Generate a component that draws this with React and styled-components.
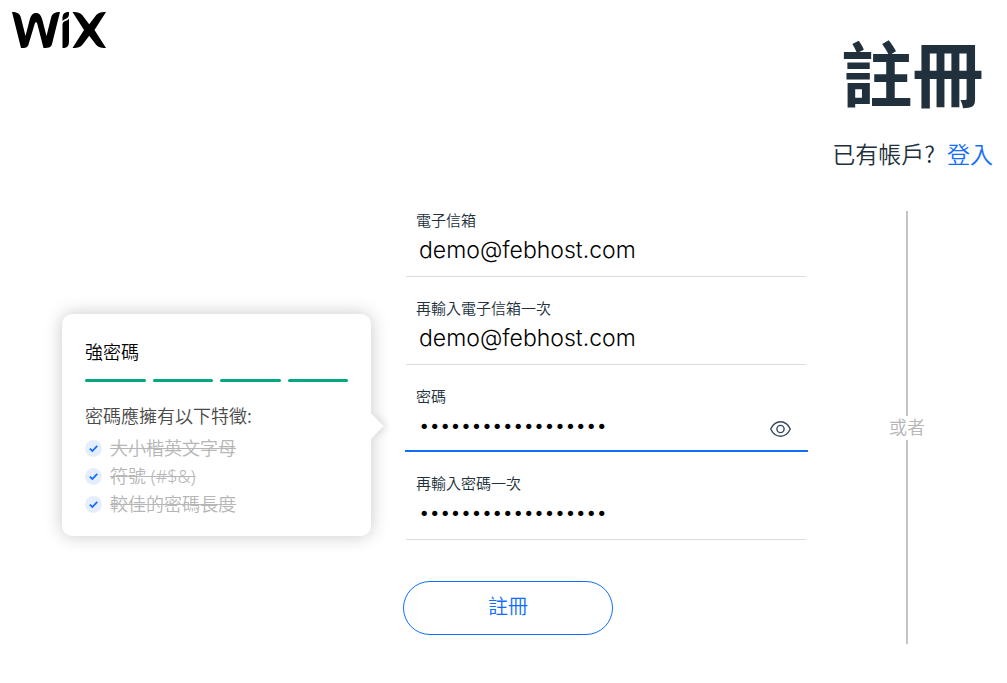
import React, { useState } from "react";
import styled, { createGlobalStyle } from "styled-components";

const GlobalStyle = createGlobalStyle`
  *, *::before, *::after { box-sizing: border-box; }
  body {
    margin: 0;
    background: #fff;
    color: #20303c;
    font-family: "Noto Sans CJK TC", sans-serif;
    font-weight: 350;
  }
`;

const Page = styled.div`
  min-height: 100vh;
  padding-bottom: 39px;
`;

const Header = styled.header`
  display: flex;
  align-items: flex-end;
  height: 48px;
  padding-left: 12px;
`;

const Logo = styled.svg`
  display: block;
  width: 94px;
  height: 36px;
`;

const Heading = styled.div`
  display: flex;
  flex-direction: column;
  align-items: flex-end;
  height: 141px;
`;

const HeadingInner = styled.div`
  display: flex;
  flex-direction: column;
  align-items: center;
  margin-top: -18px;
  padding-right: 14px;
`;

const Title = styled.h1`
  margin: 0;
  font-size: 71px;
  line-height: 80px;
  font-weight: 700;
`;

const Login = styled.p`
  margin: 27px 0 0;
  font-size: 23px;
  line-height: 32px;
`;

const LoginLink = styled.a`
  margin-left: 12px;
  color: #116dff;
  text-decoration: none;
`;

const Main = styled.main`
  display: grid;
  grid-template-columns: 309px minmax(0, 1fr) 36px;
  align-items: start;
  padding: 0 82px 0 62px;
`;

const Card = styled.aside`
  position: relative;
  height: 222px;
  margin-top: 125px;
  padding: 23px;
  border-radius: 10px;
  background: #fff;
  box-shadow: 0 0 18px rgba(0, 0, 0, 0.22);
  font-size: 18px;

  &::after {
    content: "";
    position: absolute;
    top: 103px;
    right: -9px;
    width: 18px;
    height: 18px;
    background: #fff;
    box-shadow: 4px -4px 8px -2px rgba(0, 0, 0, 0.14);
    transform: rotate(45deg);
    clip-path: polygon(-60% -60%, 160% 160%, 160% -60%);
  }
`;

const Strength = styled.h2`
  margin: 0;
  color: #000;
  font-size: 18px;
  line-height: 28px;
  font-weight: 350;
`;

const Meter = styled.div`
  display: grid;
  grid-template-columns: repeat(4, 1fr);
  gap: 7px;
  margin-top: 14px;
`;

const MeterBar = styled.span`
  height: 3px;
  border-radius: 2px;
  background: #00a87e;
`;

const Requirements = styled.p`
  margin: 19px 0 5px;
  color: #4a4a4a;
  line-height: 28px;
`;

const RuleList = styled.ul`
  margin: 0;
  padding: 0;
  list-style: none;
`;

const Rule = styled.li`
  display: flex;
  align-items: center;
  gap: 8px;
  height: 28px;
  color: #b6b6b6;
`;

const RuleText = styled.span`
  font-family: "Noto Sans", "Noto Sans CJK TC", sans-serif;
  line-height: 28px;
  text-decoration: line-through;
`;

const CheckBadge = styled.svg`
  width: 17px;
  height: 17px;
  flex: none;
`;

const Form = styled.form`
  margin: 0 81px 0 32px;
`;

const Field = styled.div`
  display: flex;
  flex-direction: column;
  height: ${(p) => (p.$active ? 87 : 88)}px;
  margin: ${(p) => (p.$active ? "0 0 0 2px" : "0 2px 0 3px")};
  padding: ${(p) => (p.$active ? "20px 17px 0 11px" : "20px 17px 0 10px")};
  border-bottom: ${(p) => (p.$active ? "2px solid #116dff" : "1px solid #dcdcdc")};
`;

const Label = styled.label`
  font-size: 15px;
  line-height: 22px;
`;

const InputRow = styled.div`
  display: flex;
  align-items: center;
  height: ${(p) => (p.$secret ? 36 : 38)}px;
`;

const Input = styled.input`
  flex: 1;
  min-width: 0;
  height: 36px;
  padding: 0 0 0 3px;
  border: 0;
  outline: 0;
  background: transparent;
  color: #000;
  font-family: ${(p) => (p.type === "password" ? "Lato" : "Inter")}, sans-serif;
  font-size: ${(p) => (p.type === "password" ? 18 : 23)}px;
  font-weight: 300;
`;

const EyeButton = styled.button`
  display: flex;
  padding: 8px 0 0;
  border: 0;
  background: none;
  cursor: pointer;
`;

const Submit = styled.button`
  display: block;
  width: 210px;
  height: 54px;
  margin-top: 41px;
  padding: 0 0 5px;
  border: 1px solid #116dff;
  border-radius: 27px;
  background: #fff;
  color: #116dff;
  font: inherit;
  font-size: 20px;
  cursor: pointer;
`;

const Divider = styled.div`
  display: flex;
  flex-direction: column;
  align-items: center;
  height: 433px;
  margin-top: 22px;
  color: #b6b6b6;
  font-size: 18px;
  line-height: 20px;
  white-space: nowrap;

  &::before, &::after {
    content: "";
    width: 2px;
    flex: 1;
    background: #c4c4c4;
  }

  &::after {
    margin-top: 4px;
  }
`;

const fields = [
  { id: "email", label: "電子信箱", type: "email", value: "demo@febhost.com" },
  { id: "email2", label: "再輸入電子信箱一次", type: "email", value: "demo@febhost.com" },
  { id: "password", label: "密碼", type: "password", value: "Abcdefgh#1234567$&", active: true },
  { id: "password2", label: "再輸入密碼一次", type: "password", value: "Abcdefgh#1234567$&" },
];

const rules = ["大小楷英文字母", "符號 (#$&)", "較佳的密碼長度"];

function Check() {
  return (
    <CheckBadge viewBox="0 0 17 17" aria-hidden="true">
      <circle cx="8.5" cy="8.5" r="8.5" fill="#e4eeff" />
      <path d="M4.8 8.6 7.4 11 12.2 5.8" fill="none" stroke="#116dff" strokeWidth="1.8" />
    </CheckBadge>
  );
}

function WixMark() {
  return (
    <Logo viewBox="0 0 94 36" role="img" aria-label="Wix">
      <path d="M0 0C5 0 7.800 1.200 9 6L13.500 24 17.500 8.500C18.800 3.500 20.500 1 24 1S29.200 3.500 30.500 8.500L34.500 24 39 6C40.200 1.200 43 0 48 0L40 32C39.300 35 37.500 36 31.500 36L25.200 11.500C24.800 9.800 23.200 9.800 22.800 11.500L16.500 32.500C15.700 35.500 13.500 36 9 36Z" />
      <path d="M57 0V2C57 5 55.500 6 53.500 7 52.500 7.500 51.500 8 50.500 9V6C50.500 1.500 53 0 57 0Z" />
      <path d="M57 6.500V29C57 34.500 55 36 50.500 36V13C50.500 10 52 9.500 54 8.700 55.500 8 56.500 7.500 57 6.500Z" />
      <path d="M60.500 0C66.500 0 69 1.200 71 4L77.200 12.300 83.500 4C85.500 1.200 88 0 94 0L82.500 18 94 36C88 36 85.500 34.800 83.500 32L77.200 23.700 71 32C69 34.800 66.500 36 60.500 36L72 18Z" />
    </Logo>
  );
}

function Eye() {
  return (
    <svg width="21" height="16" viewBox="0 0 21 16" fill="none" stroke="#33475a" strokeWidth="1.4" aria-hidden="true">
      <path d="M.7 8C3 3.200 6.400.8 10.500.8S18 3.200 20.300 8C18 12.800 14.600 15.200 10.500 15.200S3 12.800.7 8Z" />
      <circle cx="10.5" cy="8" r="3.6" />
    </svg>
  );
}

function FormField({ id, label, type, value, active }) {
  const [text, setText] = useState(value);
  const [shown, setShown] = useState(false);
  return (
    <Field $active={active}>
      <Label htmlFor={id}>{label}</Label>
      <InputRow $secret={type === "password"}>
        <Input
          id={id}
          type={shown ? "text" : type}
          value={text}
          onChange={(e) => setText(e.target.value)}
        />
        {active && (
          <EyeButton type="button" aria-label="顯示密碼" onClick={() => setShown(!shown)}>
            <Eye />
          </EyeButton>
        )}
      </InputRow>
    </Field>
  );
}

export default function App() {
  return (
    <Page lang="zh-Hant">
      <GlobalStyle />
      <Header>
        <WixMark />
      </Header>
      <Heading>
        <HeadingInner>
          <Title>註冊</Title>
          <Login>
            已有帳戶?<LoginLink href="#login">登入</LoginLink>
          </Login>
        </HeadingInner>
      </Heading>
      <Main>
        <Card>
          <Strength>強密碼</Strength>
          <Meter>
            <MeterBar />
            <MeterBar />
            <MeterBar />
            <MeterBar />
          </Meter>
          <Requirements>密碼應擁有以下特徵:</Requirements>
          <RuleList>
            {rules.map((rule) => (
              <Rule key={rule}>
                <Check />
                <RuleText>{rule}</RuleText>
              </Rule>
            ))}
          </RuleList>
        </Card>
        <Form onSubmit={(e) => e.preventDefault()}>
          {fields.map((field) => (
            <FormField key={field.id} {...field} />
          ))}
          <Submit type="submit">註冊</Submit>
        </Form>
        <Divider>或者</Divider>
      </Main>
    </Page>
  );
}
